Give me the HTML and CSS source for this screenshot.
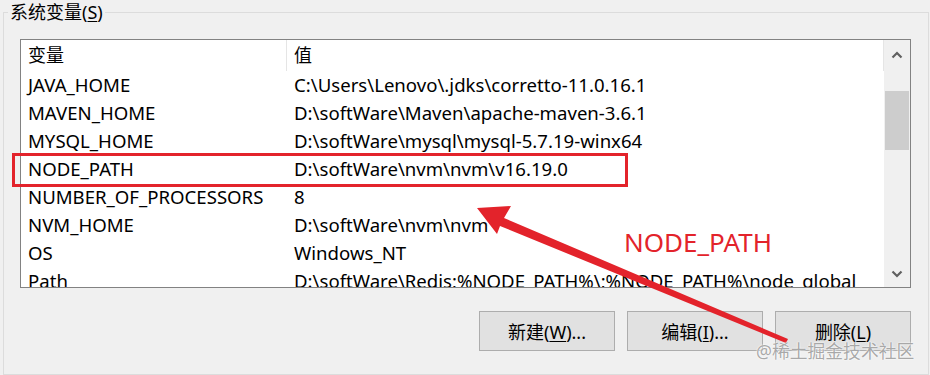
FILE: index.html
```html
<!DOCTYPE html>
<html>
  <head>
    <title>系统变量</title>
    <link rel="stylesheet" href="styles.css">
  </head>
  <body>
    <fieldset class="group">
      <legend class="group-title">系统变量(<u>S</u>)</legend>

      <div class="list">
        <div class="list-body">
          <div class="row header">
            <div class="cell">变量</div>
            <div class="cell">值</div>
          </div>
          <div class="row"><div class="cell">JAVA_HOME</div><div class="cell">C:\Users\Lenovo\.jdks\corretto-11.0.16.1</div></div>
          <div class="row"><div class="cell">MAVEN_HOME</div><div class="cell">D:\softWare\Maven\apache-maven-3.6.1</div></div>
          <div class="row"><div class="cell">MYSQL_HOME</div><div class="cell">D:\softWare\mysql\mysql-5.7.19-winx64</div></div>
          <div class="row"><div class="cell">NODE_PATH</div><div class="cell">D:\softWare\nvm\nvm\v16.19.0</div></div>
          <div class="row"><div class="cell">NUMBER_OF_PROCESSORS</div><div class="cell">8</div></div>
          <div class="row"><div class="cell">NVM_HOME</div><div class="cell">D:\softWare\nvm\nvm</div></div>
          <div class="row"><div class="cell">OS</div><div class="cell">Windows_NT</div></div>
          <div class="row"><div class="cell">Path</div><div class="cell">D:\softWare\Redis;%NODE_PATH%\;%NODE_PATH%\node_global</div></div>
        </div>
        <div class="scrollbar">
          <div class="scroll-btn">
            <svg width="12" height="8" viewBox="0 0 12 8"><polyline points="1.5,6.5 6,2 10.5,6.5" fill="none" stroke="#606060" stroke-width="2.2"/></svg>
          </div>
          <div class="scroll-track">
            <div class="scroll-thumb"></div>
          </div>
          <div class="scroll-btn down">
            <svg width="12" height="8" viewBox="0 0 12 8"><polyline points="1.5,1.5 6,6 10.5,1.5" fill="none" stroke="#606060" stroke-width="2.2"/></svg>
          </div>
        </div>
      </div>

      <div class="actions">
        <button class="button">新建(<u>W</u>)...</button>
        <button class="button">编辑(<u>I</u>)...</button>
        <button class="button">删除(<u>L</u>)</button>
      </div>
    </fieldset>

    <!-- annotations drawn over the dialog -->
    <div class="mark-box"></div>
    <div class="mark-label">NODE_PATH</div>
    <svg class="mark-arrow" width="930" height="375" viewBox="0 0 930 375">
      <polygon points="477,208 511,206 504,218 788,339 786,343 500,226 497,234" fill="#e3232b"/>
    </svg>
    <div class="watermark">@稀土掘金技术社区</div>
  </body>
</html>
```

FILE: styles.css
```css
:root {
  --bg: #f0f0f0;
  --frame: #dcdcdc;
  --list-border: #828282;
  --button-bg: #e1e1e1;
  --button-border: #adadad;
  --mark: #e3232b;
}

body {
  width: 930px;
  height: 375px;
  margin: 0;
  overflow: hidden;
  position: relative;
  background: var(--bg);
  color: #000;
  font-family: 'Noto Sans', 'Noto Sans CJK SC', sans-serif;
  font-size: 18px;
}

.group {
  margin: 1px 1px 0 3px;
  padding: 0 17px 23px 16px;
  border: 1px solid var(--frame);
  min-width: 0;
}

.group-title {
  margin-left: -12px;
  padding: 0 2px;
  line-height: 22px;
}

.group-title u,
.button u {
  text-underline-offset: 2px;
}

.list {
  margin-top: 16px;
  height: 247px;
  display: flex;
  background: #fff;
  border: 1px solid var(--list-border);
}

.list-body {
  flex: 1;
  min-width: 0;
  overflow: hidden;
}

.row {
  display: grid;
  grid-template-columns: 266px 1fr;
  height: 28px;
  line-height: 28px;
  font-size: 18.6px;
  white-space: nowrap;
}

.cell {
  padding-left: 7px;
  overflow: hidden;
}

.row.header {
  height: 31px;
  line-height: 30px;
  font-size: 18px;
}

.row.header .cell {
  border-right: 1px solid #e5e5e5;
}

.scrollbar {
  width: 26px;
  display: flex;
  flex-direction: column;
  background: var(--bg);
}

.scroll-btn {
  height: 30px;
  display: flex;
  align-items: center;
  justify-content: center;
}

.scroll-btn.down {
  padding-top: 4px;
  box-sizing: border-box;
}

.scroll-track {
  flex: 1;
  padding: 21px 1px 0;
}

.scroll-thumb {
  height: 59px;
  background: #cdcdcd;
}

.actions {
  display: flex;
  justify-content: flex-end;
  gap: 12px;
  margin-top: 23px;
}

.button {
  width: 136px;
  height: 40px;
  padding: 0;
  background: var(--button-bg);
  border: 1px solid var(--button-border);
  font-family: inherit;
  font-size: 18px;
  color: #000;
}

/* Annotation overlays */
.mark-box {
  position: absolute;
  left: 12px;
  top: 153px;
  width: 610px;
  height: 28px;
  border: 3px solid var(--mark);
}

.mark-label {
  position: absolute;
  left: 624px;
  top: 224px;
  font-size: 26px;
  line-height: 36px;
  color: var(--mark);
}

.mark-arrow {
  position: absolute;
  left: 0;
  top: 0;
  pointer-events: none;
}

.watermark {
  position: absolute;
  left: 756px;
  top: 339px;
  font-size: 17.8px;
  line-height: 24px;
  color: rgba(140, 140, 140, 0.75);
  text-shadow: 0 0 2px #fff, 0 0 1px #fff;
}
```
